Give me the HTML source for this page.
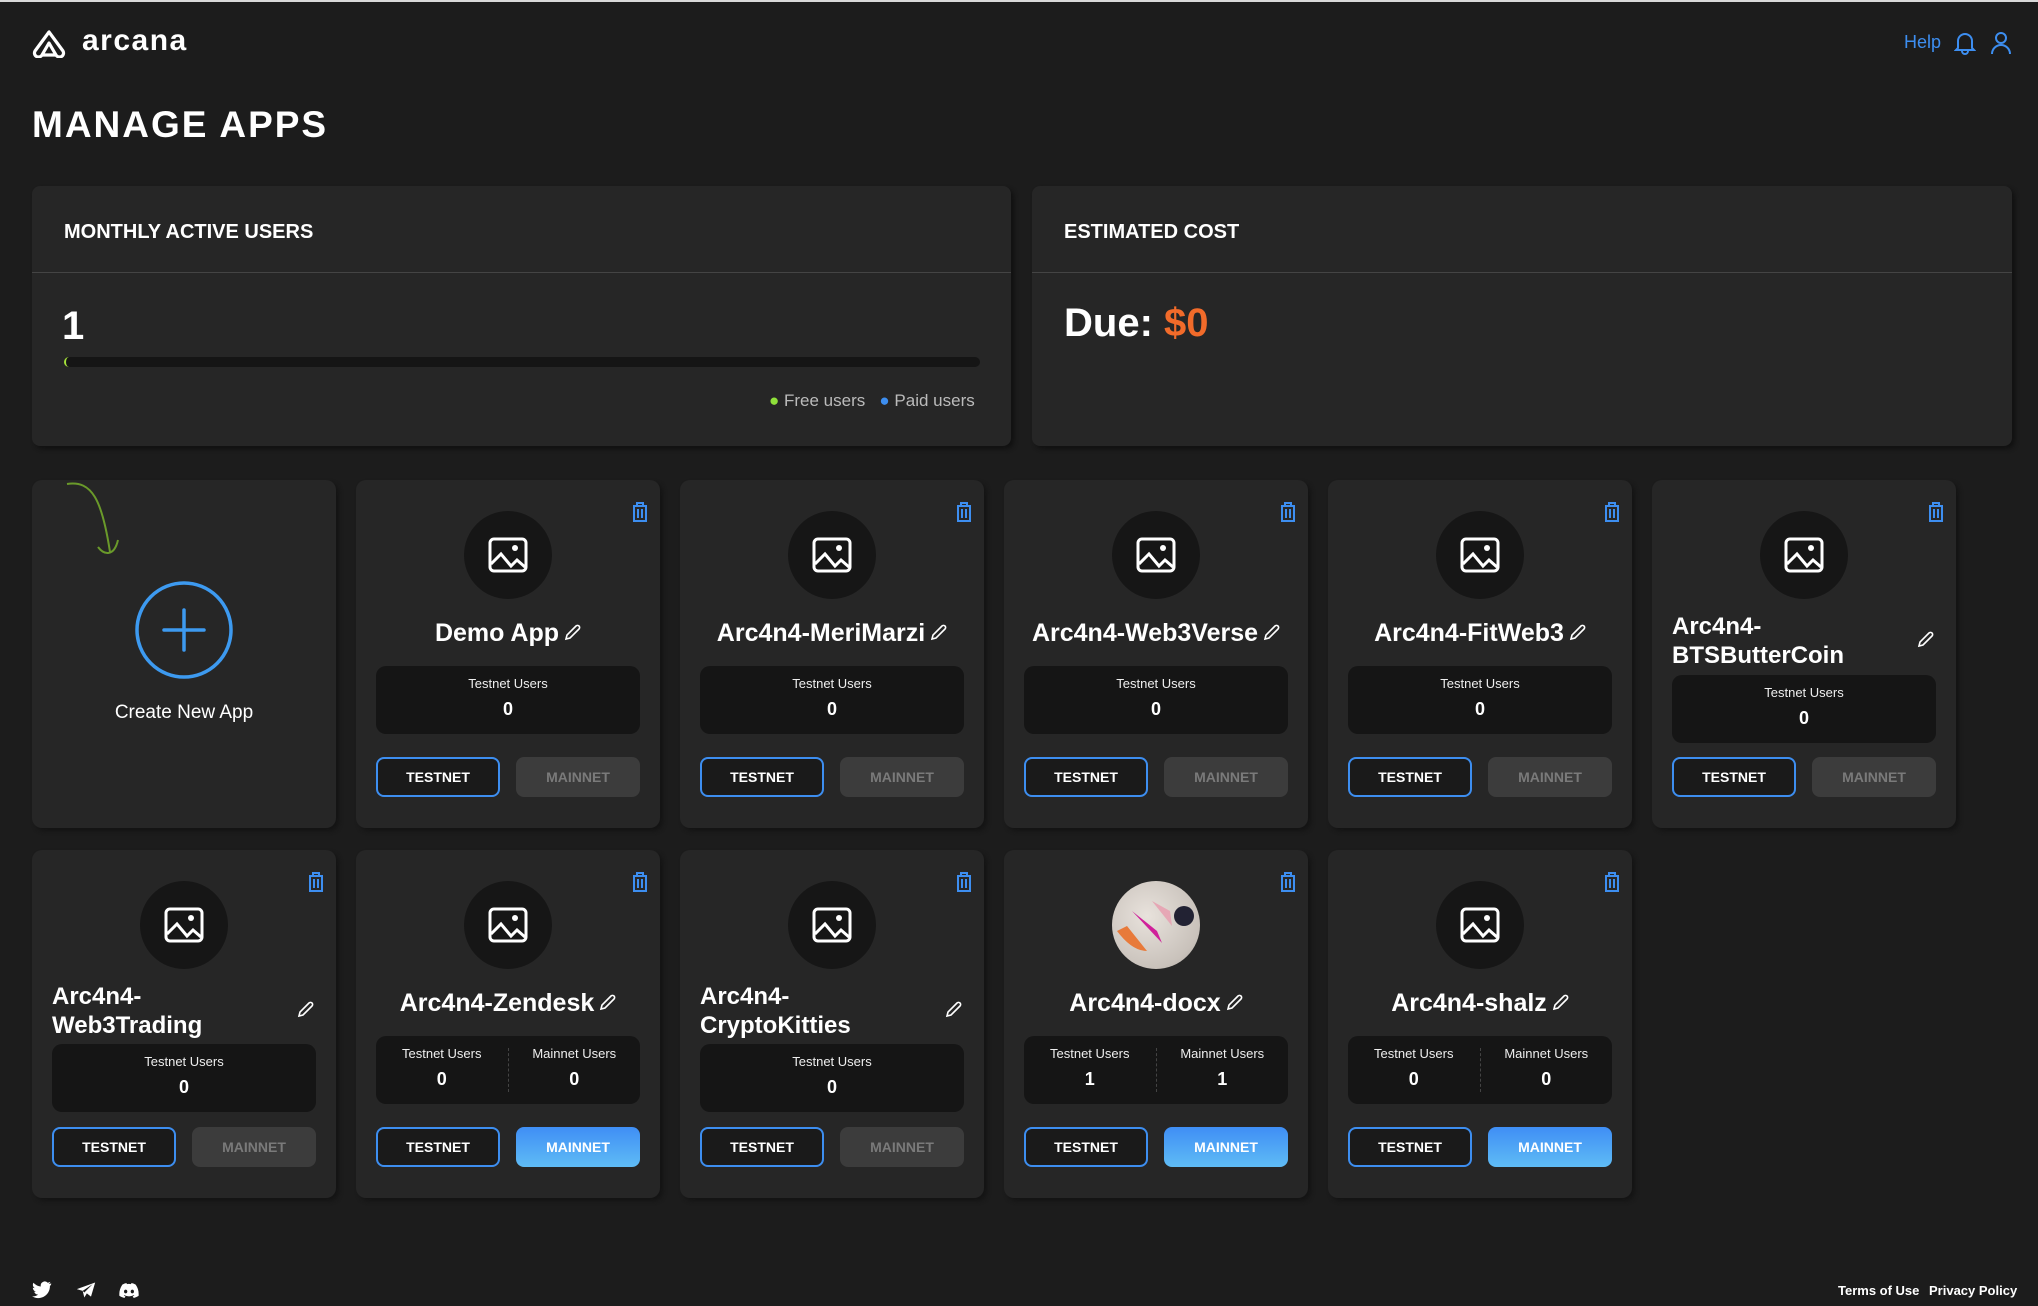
<!DOCTYPE html>
<html><head><meta charset="utf-8"><style>
*{box-sizing:border-box;margin:0;padding:0}
body{width:2038px;height:1306px;background:#1c1c1c;font-family:"Liberation Sans",sans-serif;color:#fff;position:relative;overflow:hidden}
.abs{position:absolute}
.panel{position:absolute;background:#262626;border-radius:8px;box-shadow:3px 3px 4px #111}
.card{position:absolute;width:304px;height:348px;background:#262626;border-radius:10px;box-shadow:3px 3px 4px #141414}
.trash{position:absolute;left:275px;top:22px}
.av{position:absolute;left:108px;top:31px;width:88px;height:88px;border-radius:50%;background:#161616;display:flex;align-items:center;justify-content:center}
.t1{position:absolute;left:0;right:0;top:139px;text-align:center;font-size:25px;font-weight:bold;white-space:nowrap}
.t1 svg{vertical-align:-1px;margin-left:4px}
.t2{position:absolute;left:20px;top:132px;font-size:24px;font-weight:bold;line-height:29px}
.pen2{position:absolute;left:264px;top:151px}
.box{position:absolute;left:20px;width:264px;height:68px;background:#151515;border-radius:10px;display:flex}
.box>div{flex:1;text-align:center;padding-top:10px}
.box .l{font-size:13px;color:#eee}
.box .v{font-size:18px;font-weight:bold;margin-top:8px}
.box .sep{flex:0 0 1px;border-left:1px dashed #444;margin:12px 0}
.bt{position:absolute;top:277px;width:124px;height:40px;border-radius:8px;font-size:14px;font-weight:bold;display:flex;align-items:center;justify-content:center}
.tn{left:20px;border:2px solid #3d8ef0;background:#1a1a1a}
.mn{left:160px;background:#3c3c3c;color:#7a7a7a}
.mn.on{background:linear-gradient(#3f8ef5,#5fbcf5);color:#fff}
</style></head><body>
<div class="abs" style="left:0;top:0;width:2038px;height:2px;background:#d8d8d8"></div>
<svg class="abs" style="left:31px;top:29px" width="36" height="29" viewBox="0 0 36 29"><path d="M18 3 L4 22 a4 4 0 0 0 7 4 L18 14 L25 26 a4 4 0 0 0 7 -4 L18 3 Z M11 26 L25 26" fill="none" stroke="#fff" stroke-width="3.2" stroke-linejoin="round"/></svg>
<div class="abs" style="left:82px;top:24px;font-size:30px;letter-spacing:1.5px;font-weight:bold">arcana</div>
<div class="abs" style="left:1904px;top:32px;font-size:18px;color:#3d8ef0">Help</div>
<svg class="abs" style="left:1954px;top:31px" width="22" height="24" viewBox="0 0 22 24"><path d="M4 17 V10 a7 7 0 0 1 14 0 V17 L20 19 H2 Z M8 20 a3 3 0 0 0 6 0" fill="none" stroke="#3d8ef0" stroke-width="2"/></svg>
<svg class="abs" style="left:1990px;top:31px" width="22" height="24" viewBox="0 0 22 24"><circle cx="11" cy="7" r="5" fill="none" stroke="#3d8ef0" stroke-width="2"/><path d="M2 23 a9 9 0 0 1 18 0" fill="none" stroke="#3d8ef0" stroke-width="2"/></svg>
<div class="abs" style="left:32px;top:104px;font-size:37px;font-weight:bold;letter-spacing:2px">MANAGE APPS</div>

<div class="panel" style="left:32px;top:186px;width:979px;height:260px">
<div class="abs" style="left:32px;top:35px;font-size:20px;font-weight:bold">MONTHLY ACTIVE USERS</div>
<div class="abs" style="left:0;right:0;top:86px;border-top:1px solid #444"></div>
<div class="abs" style="left:30px;top:118px;font-size:40px;font-weight:bold">1</div>
<div class="abs" style="left:32px;top:171px;width:916px;height:10px;background:#151515;border-radius:5px;border-left:2px solid #a6e33a"></div>
<div class="abs" style="left:737px;top:205px;font-size:17px;color:#bbb"><span style="color:#8fe03a">●</span> Free users &nbsp;&nbsp;<span style="color:#3d8ef0">●</span> Paid users</div>
</div>
<div class="panel" style="left:1032px;top:186px;width:980px;height:260px">
<div class="abs" style="left:32px;top:35px;font-size:20px;font-weight:bold">ESTIMATED COST</div>
<div class="abs" style="left:0;right:0;top:86px;border-top:1px solid #444"></div>
<div class="abs" style="left:32px;top:115px;font-size:40px;font-weight:bold">Due: <span style="color:#f26b2a">$0</span></div>
</div>

<div class="card" style="left:32px;top:480px">
<svg class="abs" style="left:30px;top:0" width="80" height="100" viewBox="0 0 80 100"><path d="M5 4 C30 0 40 20 48 72 M36 67 C42 75 52 77 56 60" fill="none" stroke="#6a9a2a" stroke-width="2"/></svg>
<svg class="abs" style="left:102px;top:100px" width="100" height="100" viewBox="0 0 100 100"><circle cx="50" cy="50" r="47" fill="none" stroke="#3d9af0" stroke-width="3.5"/><path d="M50 30 V70 M30 50 H70" stroke="#3d9af0" stroke-width="3.5" stroke-linecap="round"/></svg>
<div class="abs" style="left:0;right:0;top:222px;text-align:center;font-size:19px">Create New App</div>
</div>

<div class="card" style="left:356px;top:480px"><svg class="trash" width="18" height="20" viewBox="0 0 18 20"><path d="M2 4H16M6 4V1H12V4M3 4V19H15V4M7 7V16M11 7V16" fill="none" stroke="#3d8ef0" stroke-width="2"/></svg><div class="av"><svg width="40" height="36" viewBox="0 0 40 36"><rect x="2" y="2" width="36" height="32" rx="4" fill="none" stroke="#fff" stroke-width="3"/><circle cx="27" cy="11" r="3" fill="#fff"/><path d="M3 27 L13 17 L23 29 L29 23 L37 30" fill="none" stroke="#fff" stroke-width="3"/></svg></div><div class="t1">Demo App<svg width="18" height="18" viewBox="0 0 18 18"><path d="M3 15 L4 11 L13 2 a2 2 0 0 1 3 3 L7 14 Z" fill="none" stroke="#fff" stroke-width="1.6"/></svg></div><div class="box" style="top:186px"><div><div class="l">Testnet Users</div><div class="v">0</div></div></div><div class="bt tn">TESTNET</div><div class="bt mn">MAINNET</div></div>

<div class="card" style="left:680px;top:480px"><svg class="trash" width="18" height="20" viewBox="0 0 18 20"><path d="M2 4H16M6 4V1H12V4M3 4V19H15V4M7 7V16M11 7V16" fill="none" stroke="#3d8ef0" stroke-width="2"/></svg><div class="av"><svg width="40" height="36" viewBox="0 0 40 36"><rect x="2" y="2" width="36" height="32" rx="4" fill="none" stroke="#fff" stroke-width="3"/><circle cx="27" cy="11" r="3" fill="#fff"/><path d="M3 27 L13 17 L23 29 L29 23 L37 30" fill="none" stroke="#fff" stroke-width="3"/></svg></div><div class="t1">Arc4n4-MeriMarzi<svg width="18" height="18" viewBox="0 0 18 18"><path d="M3 15 L4 11 L13 2 a2 2 0 0 1 3 3 L7 14 Z" fill="none" stroke="#fff" stroke-width="1.6"/></svg></div><div class="box" style="top:186px"><div><div class="l">Testnet Users</div><div class="v">0</div></div></div><div class="bt tn">TESTNET</div><div class="bt mn">MAINNET</div></div>

<div class="card" style="left:1004px;top:480px"><svg class="trash" width="18" height="20" viewBox="0 0 18 20"><path d="M2 4H16M6 4V1H12V4M3 4V19H15V4M7 7V16M11 7V16" fill="none" stroke="#3d8ef0" stroke-width="2"/></svg><div class="av"><svg width="40" height="36" viewBox="0 0 40 36"><rect x="2" y="2" width="36" height="32" rx="4" fill="none" stroke="#fff" stroke-width="3"/><circle cx="27" cy="11" r="3" fill="#fff"/><path d="M3 27 L13 17 L23 29 L29 23 L37 30" fill="none" stroke="#fff" stroke-width="3"/></svg></div><div class="t1">Arc4n4-Web3Verse<svg width="18" height="18" viewBox="0 0 18 18"><path d="M3 15 L4 11 L13 2 a2 2 0 0 1 3 3 L7 14 Z" fill="none" stroke="#fff" stroke-width="1.6"/></svg></div><div class="box" style="top:186px"><div><div class="l">Testnet Users</div><div class="v">0</div></div></div><div class="bt tn">TESTNET</div><div class="bt mn">MAINNET</div></div>

<div class="card" style="left:1328px;top:480px"><svg class="trash" width="18" height="20" viewBox="0 0 18 20"><path d="M2 4H16M6 4V1H12V4M3 4V19H15V4M7 7V16M11 7V16" fill="none" stroke="#3d8ef0" stroke-width="2"/></svg><div class="av"><svg width="40" height="36" viewBox="0 0 40 36"><rect x="2" y="2" width="36" height="32" rx="4" fill="none" stroke="#fff" stroke-width="3"/><circle cx="27" cy="11" r="3" fill="#fff"/><path d="M3 27 L13 17 L23 29 L29 23 L37 30" fill="none" stroke="#fff" stroke-width="3"/></svg></div><div class="t1">Arc4n4-FitWeb3<svg width="18" height="18" viewBox="0 0 18 18"><path d="M3 15 L4 11 L13 2 a2 2 0 0 1 3 3 L7 14 Z" fill="none" stroke="#fff" stroke-width="1.6"/></svg></div><div class="box" style="top:186px"><div><div class="l">Testnet Users</div><div class="v">0</div></div></div><div class="bt tn">TESTNET</div><div class="bt mn">MAINNET</div></div>

<div class="card" style="left:1652px;top:480px"><svg class="trash" width="18" height="20" viewBox="0 0 18 20"><path d="M2 4H16M6 4V1H12V4M3 4V19H15V4M7 7V16M11 7V16" fill="none" stroke="#3d8ef0" stroke-width="2"/></svg><div class="av"><svg width="40" height="36" viewBox="0 0 40 36"><rect x="2" y="2" width="36" height="32" rx="4" fill="none" stroke="#fff" stroke-width="3"/><circle cx="27" cy="11" r="3" fill="#fff"/><path d="M3 27 L13 17 L23 29 L29 23 L37 30" fill="none" stroke="#fff" stroke-width="3"/></svg></div><div class="t2">Arc4n4-<br>BTSButterCoin</div><svg class="pen2" width="18" height="18" viewBox="0 0 18 18"><path d="M3 15 L4 11 L13 2 a2 2 0 0 1 3 3 L7 14 Z" fill="none" stroke="#fff" stroke-width="1.6"/></svg><div class="box" style="top:195px"><div><div class="l">Testnet Users</div><div class="v">0</div></div></div><div class="bt tn">TESTNET</div><div class="bt mn">MAINNET</div></div>

<div class="card" style="left:32px;top:850px"><svg class="trash" width="18" height="20" viewBox="0 0 18 20"><path d="M2 4H16M6 4V1H12V4M3 4V19H15V4M7 7V16M11 7V16" fill="none" stroke="#3d8ef0" stroke-width="2"/></svg><div class="av"><svg width="40" height="36" viewBox="0 0 40 36"><rect x="2" y="2" width="36" height="32" rx="4" fill="none" stroke="#fff" stroke-width="3"/><circle cx="27" cy="11" r="3" fill="#fff"/><path d="M3 27 L13 17 L23 29 L29 23 L37 30" fill="none" stroke="#fff" stroke-width="3"/></svg></div><div class="t2">Arc4n4-<br>Web3Trading</div><svg class="pen2" width="18" height="18" viewBox="0 0 18 18"><path d="M3 15 L4 11 L13 2 a2 2 0 0 1 3 3 L7 14 Z" fill="none" stroke="#fff" stroke-width="1.6"/></svg><div class="box" style="top:194px"><div><div class="l">Testnet Users</div><div class="v">0</div></div></div><div class="bt tn">TESTNET</div><div class="bt mn">MAINNET</div></div>

<div class="card" style="left:356px;top:850px"><svg class="trash" width="18" height="20" viewBox="0 0 18 20"><path d="M2 4H16M6 4V1H12V4M3 4V19H15V4M7 7V16M11 7V16" fill="none" stroke="#3d8ef0" stroke-width="2"/></svg><div class="av"><svg width="40" height="36" viewBox="0 0 40 36"><rect x="2" y="2" width="36" height="32" rx="4" fill="none" stroke="#fff" stroke-width="3"/><circle cx="27" cy="11" r="3" fill="#fff"/><path d="M3 27 L13 17 L23 29 L29 23 L37 30" fill="none" stroke="#fff" stroke-width="3"/></svg></div><div class="t1">Arc4n4-Zendesk<svg width="18" height="18" viewBox="0 0 18 18"><path d="M3 15 L4 11 L13 2 a2 2 0 0 1 3 3 L7 14 Z" fill="none" stroke="#fff" stroke-width="1.6"/></svg></div><div class="box" style="top:186px"><div><div class="l">Testnet Users</div><div class="v">0</div></div><div class="sep"></div><div><div class="l">Mainnet Users</div><div class="v">0</div></div></div><div class="bt tn">TESTNET</div><div class="bt mn on">MAINNET</div></div>

<div class="card" style="left:680px;top:850px"><svg class="trash" width="18" height="20" viewBox="0 0 18 20"><path d="M2 4H16M6 4V1H12V4M3 4V19H15V4M7 7V16M11 7V16" fill="none" stroke="#3d8ef0" stroke-width="2"/></svg><div class="av"><svg width="40" height="36" viewBox="0 0 40 36"><rect x="2" y="2" width="36" height="32" rx="4" fill="none" stroke="#fff" stroke-width="3"/><circle cx="27" cy="11" r="3" fill="#fff"/><path d="M3 27 L13 17 L23 29 L29 23 L37 30" fill="none" stroke="#fff" stroke-width="3"/></svg></div><div class="t2">Arc4n4-<br>CryptoKitties</div><svg class="pen2" width="18" height="18" viewBox="0 0 18 18"><path d="M3 15 L4 11 L13 2 a2 2 0 0 1 3 3 L7 14 Z" fill="none" stroke="#fff" stroke-width="1.6"/></svg><div class="box" style="top:194px"><div><div class="l">Testnet Users</div><div class="v">0</div></div></div><div class="bt tn">TESTNET</div><div class="bt mn">MAINNET</div></div>

<div class="card" style="left:1004px;top:850px"><svg class="trash" width="18" height="20" viewBox="0 0 18 20"><path d="M2 4H16M6 4V1H12V4M3 4V19H15V4M7 7V16M11 7V16" fill="none" stroke="#3d8ef0" stroke-width="2"/></svg><div class="av" style="background:radial-gradient(circle at 40% 40%,#e8e2dc,#c9c2bb 70%,#a9a29c)"><svg width="88" height="88" viewBox="0 0 88 88"><path d="M20 30 L45 50 L50 62 Z" fill="#d0209a"/><path d="M40 20 L60 45 L58 30 Z" fill="#e6a7b5"/><path d="M5 50 Q20 70 35 70 L15 45 Z" fill="#e87a3a"/><circle cx="72" cy="35" r="10" fill="#223"/></svg></div><div class="t1">Arc4n4-docx<svg width="18" height="18" viewBox="0 0 18 18"><path d="M3 15 L4 11 L13 2 a2 2 0 0 1 3 3 L7 14 Z" fill="none" stroke="#fff" stroke-width="1.6"/></svg></div><div class="box" style="top:186px"><div><div class="l">Testnet Users</div><div class="v">1</div></div><div class="sep"></div><div><div class="l">Mainnet Users</div><div class="v">1</div></div></div><div class="bt tn">TESTNET</div><div class="bt mn on">MAINNET</div></div>

<div class="card" style="left:1328px;top:850px"><svg class="trash" width="18" height="20" viewBox="0 0 18 20"><path d="M2 4H16M6 4V1H12V4M3 4V19H15V4M7 7V16M11 7V16" fill="none" stroke="#3d8ef0" stroke-width="2"/></svg><div class="av"><svg width="40" height="36" viewBox="0 0 40 36"><rect x="2" y="2" width="36" height="32" rx="4" fill="none" stroke="#fff" stroke-width="3"/><circle cx="27" cy="11" r="3" fill="#fff"/><path d="M3 27 L13 17 L23 29 L29 23 L37 30" fill="none" stroke="#fff" stroke-width="3"/></svg></div><div class="t1">Arc4n4-shalz<svg width="18" height="18" viewBox="0 0 18 18"><path d="M3 15 L4 11 L13 2 a2 2 0 0 1 3 3 L7 14 Z" fill="none" stroke="#fff" stroke-width="1.6"/></svg></div><div class="box" style="top:186px"><div><div class="l">Testnet Users</div><div class="v">0</div></div><div class="sep"></div><div><div class="l">Mainnet Users</div><div class="v">0</div></div></div><div class="bt tn">TESTNET</div><div class="bt mn on">MAINNET</div></div>

<svg class="abs" style="left:32px;top:1281px" width="20" height="18" viewBox="0 0 24 20"><path d="M23 2c-1 .5-2 .7-3 .8 1-.6 1.8-1.6 2-2.7-1 .6-2 1-3.1 1.2A4.9 4.9 0 0 0 10.6 5.8 14 14 0 0 1 1.7 1.3a4.9 4.9 0 0 0 1.5 6.5c-.8 0-1.6-.2-2.2-.6 0 2.4 1.7 4.4 3.9 4.8-.7.2-1.5.2-2.2.1.6 2 2.4 3.4 4.6 3.4A9.8 9.8 0 0 1 0 17.5 14 14 0 0 0 7.5 19.7c9 0 14-7.5 14-14v-.6C22.5 4.4 23.3 3.3 23 2z" fill="#fff"/></svg>
<svg class="abs" style="left:76px;top:1281px" width="20" height="18" viewBox="0 0 24 20"><path d="M23 1 L1 9 L8 11 L10 19 L13 14 L18 18 Z M8 11 L20 3 L10 13" fill="#fff"/></svg>
<svg class="abs" style="left:119px;top:1283px" width="20" height="15" viewBox="0 0 24 18"><path d="M20 2A19 19 0 0 0 15 0l-.6 1.3a18 18 0 0 0-5 0L9 0A19 19 0 0 0 4 2C1 6.5 0 11 .5 15.5A19 19 0 0 0 6.5 18l1.3-2A12 12 0 0 1 5.8 15l.5-.4a13.5 13.5 0 0 0 11.6 0l.5.4a12 12 0 0 1-2 1l1.3 2A19 19 0 0 0 23.5 15.5C24 10.3 22.7 5.8 20 2zM8 12.5c-1.1 0-2-1-2-2.3S6.9 8 8 8s2 1 2 2.2-.9 2.3-2 2.3zm8 0c-1.1 0-2-1-2-2.3S14.9 8 16 8s2 1 2 2.2-.9 2.3-2 2.3z" fill="#fff"/></svg>
<div class="abs" style="left:1838px;top:1283px;font-size:13px;font-weight:bold">Terms of Use</div>
<div class="abs" style="left:1929px;top:1283px;font-size:13px;font-weight:bold">Privacy Policy</div>
</body></html>
